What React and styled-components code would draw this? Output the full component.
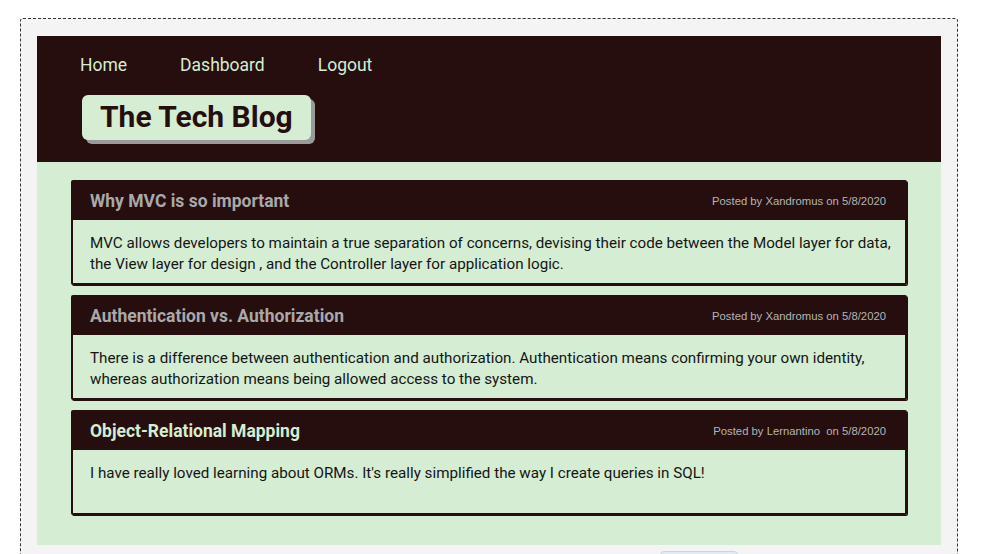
import React from 'react';
import styled, { createGlobalStyle } from 'styled-components';

const dark = '#260e0e';
const green = '#d4edd3';

const GlobalStyle = createGlobalStyle`
  body {
    margin: 0;
    background: #ffffff;
    font-family: Roboto, "Liberation Sans", sans-serif;
  }
`;

const Frame = styled.div`
  box-sizing: border-box;
  margin: 18px 0 0 20px;
  width: 938px;
  height: 600px;
  border: 1px dashed #333;
  border-radius: 3px 3px 0 0;
  background: #f4f4f4;
  padding: 17px 16px 0 16px;
`;

const Header = styled.header`
  background: ${dark};
  padding: 16px 0 22px 43px;
`;

const Nav = styled.nav`
  display: flex;
  gap: 53px;
`;

const NavLink = styled.a`
  color: ${green};
  font-size: 17.5px;
  line-height: 26px;
  text-decoration: none;
`;

const Logo = styled.h1`
  display: inline-block;
  margin: 17px 0 0 2px;
  padding: 4px 18px 5px 18px;
  background: ${green};
  color: ${dark};
  font-size: 30px;
  font-weight: 700;
  line-height: 36px;
  border-radius: 6px;
  box-shadow: 4px 4px 0 #9a9a9a;
`;

const Main = styled.main`
  background: ${green};
  padding: 18px 34px 30px;
  display: flex;
  flex-direction: column;
  gap: 10px;
`;

const Card = styled.article`
  border: 2px solid ${dark};
  border-radius: 2px;
  box-shadow: 1px 1px 0 ${dark};
`;

const CardHead = styled.div`
  background: ${dark};
  height: 38px;
  display: flex;
  align-items: center;
  justify-content: space-between;
  padding: 0 19px 0 17px;
`;

const Title = styled.h2`
  margin: 0;
  font-size: 17.5px;
  font-weight: 700;
  color: ${(p) => (p.$active ? green : '#a9a9a9')};
`;

const Meta = styled.span`
  font-family: "Liberation Sans", Arial, sans-serif;
  font-size: 11.3px;
  color: #b4b4b4;
  white-space: pre;
`;

const CardBody = styled.div`
  background: ${green};
  min-height: 42px;
  padding: 13px 6px 8px 17px;
  color: #151515;
  font-size: 15.2px;
  line-height: 21px;
`;

const Footer = styled.div`
  padding: 6px 0 0 623px;
`;

const MoreButton = styled.button`
  width: 78px;
  height: 24px;
  border: 1px solid #c7d5e4;
  border-radius: 4px;
  background: #e2ebf4;
`;

const posts = [
  {
    title: 'Why MVC is so important',
    meta: 'Posted by Xandromus on 5/8/2020',
    body: 'MVC allows developers to maintain a true separation of concerns, devising their code between the Model layer for data, the View layer for design , and the Controller layer for application logic.',
  },
  {
    title: 'Authentication vs. Authorization',
    meta: 'Posted by Xandromus on 5/8/2020',
    body: 'There is a difference between authentication and authorization. Authentication means confirming your own identity, whereas authorization means being allowed access to the system.',
  },
  {
    title: 'Object-Relational Mapping',
    meta: 'Posted by Lernantino  on 5/8/2020',
    body: "I have really loved learning about ORMs. It's really simplified the way I create queries in SQL!",
    active: true,
  },
];

const App = () => {
  return (
    <>
      <GlobalStyle />
      <Frame>
        <Header>
          <Nav>
            <NavLink href="#">Home</NavLink>
            <NavLink href="#">Dashboard</NavLink>
            <NavLink href="#">Logout</NavLink>
          </Nav>
          <Logo>The Tech Blog</Logo>
        </Header>
        <Main>
          {posts.map((post) => (
            <Card key={post.title}>
              <CardHead>
                <Title $active={post.active}>{post.title}</Title>
                <Meta>{post.meta}</Meta>
              </CardHead>
              <CardBody>{post.body}</CardBody>
            </Card>
          ))}
        </Main>
        <Footer>
          <MoreButton />
        </Footer>
      </Frame>
    </>
  );
};

export default App;
